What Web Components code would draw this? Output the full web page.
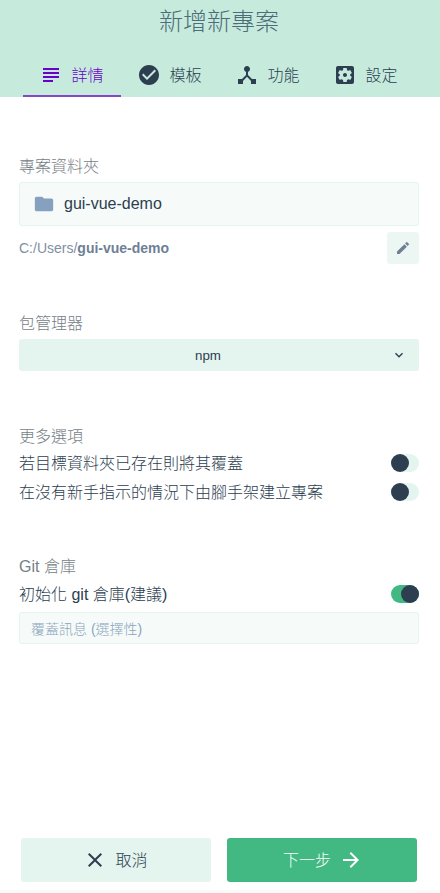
<!DOCTYPE html>
<html lang="zh-Hant"><head><meta charset="utf-8"><title>新增新專案</title>
<style>
html,body{margin:0;padding:0;height:100%;background:#fff}
body{font-family:"Liberation Sans","Noto Sans CJK TC",sans-serif;font-weight:300;color:#2c3e50}
</style></head><body>
<template id="t-tab"><style>
:host{display:flex;box-sizing:border-box;width:98px;height:44px;align-items:center;justify-content:center;gap:8px;font-size:16px;color:#2c3e50;padding:2px 1px 0 0;border-bottom:2px solid transparent}
:host([active]){color:#6a00c9;border-bottom-color:#8746c8}
::slotted(svg){display:block;flex:none}
span{margin-top:-3px}
</style><slot name="icon"></slot><span><slot></slot></span></template>

<template id="t-header"><style>
:host{display:block;height:97px;background:#c6ebdd}
h1{margin:0;height:43px;padding-right:2px;font-size:24px;line-height:44px;font-weight:300;text-align:center;color:#4d6b78}
nav{display:flex;padding:10px 0 0 23px}
</style><h1><slot name="title"></slot></h1><nav><slot></slot></nav></template>

<template id="t-section"><style>
:host{display:block;padding:0 21px 0 19px}
.l{font-size:16px;height:20px;line-height:22px;color:#767e86}
</style><div class="l"><slot name="label"></slot></div><slot></slot></template>

<template id="t-folder"><style>
:host{display:flex;box-sizing:border-box;height:44px;margin-top:6px;align-items:center;padding-left:13px;gap:9px;background:#f6fbf9;border:1px solid #e4f4ee;border-radius:3px;font-size:16px;color:#2c3e50}
svg{display:block}
</style><svg width="22" height="22" viewBox="0 0 24 24"><path fill="#86a0bf" d="M10 4H4c-1.100 0-2 .9-2 2v12c0 1.100.9 2 2 2h16c1.100 0 2-.9 2-2V8c0-1.100-.9-2-2-2h-8l-2-2z"/></svg><slot></slot></template>

<template id="t-path"><style>
:host{display:flex;align-items:center;justify-content:space-between;margin-top:6px;font-size:14px;color:#7f8fa4}
.e{width:32px;height:32px;border-radius:3px;background:#ecf7f3;display:flex;align-items:center;justify-content:center}
svg{display:block}
</style><span><slot></slot></span><div class="e"><svg width="16" height="16" viewBox="0 0 24 24"><path fill="#6e8093" d="M3 17.250V21h3.750L17.810 9.940l-3.750-3.750L3 17.250zM20.710 7.040a1 1 0 0 0 0-1.410l-2.340-2.340a1 1 0 0 0-1.410 0l-1.830 1.830 3.750 3.750 1.830-1.830z"/></svg></div></template>

<template id="t-select"><style>
:host{display:flex;box-sizing:border-box;height:32px;margin-top:6px;padding-right:22px;align-items:center;position:relative;justify-content:center;background:#e4f4ee;border-radius:3px;font-size:13.333px;color:#2c3e50}
svg{position:absolute;right:12px;top:8px;display:block}
</style><span><slot></slot></span><svg width="16" height="16" viewBox="0 0 24 24"><path fill="#2c3e50" d="M7.410 8.590 12 13.170l4.590-4.580L18 10l-6 6-6-6z"/></svg></template>

<template id="t-switch"><style>
:host{display:flex;align-items:center;justify-content:space-between;height:29px;font-size:16px;color:#2c3e50}
span{margin-top:-2px}
.t{position:relative;width:28px;height:18px;flex:none;background:#e4f4ee;border-radius:9px}
.k{position:absolute;left:0;top:0;width:18px;height:18px;border-radius:50%;background:#2c3e50}
:host([on]) .t{background:#42b983}
:host([on]) .k{left:10px}
</style><span><slot></slot></span><div class="t"><div class="k"></div></div></template>

<template id="t-input"><style>
:host{display:flex;box-sizing:border-box;height:32px;margin-top:3px;align-items:center;padding-left:11px;background:#f6fbf9;border:1px solid #e4f4ee;border-radius:3px;font-size:14px;color:#8aa5c0}
</style><slot></slot></template>

<template id="t-btn"><style>
:host{display:flex;box-sizing:border-box;width:190px;height:44px;padding-right:1px;align-items:center;justify-content:center;gap:8px;border-radius:3px;background:#e4f4ee;color:#2c3e50;font-size:16px}
:host([primary]){background:#42b983;color:#fff;padding:0 0 0 2px}
::slotted(svg){display:block;flex:none}
span{margin-top:-3px}
</style><slot name="before"></slot><span><slot></slot></span><slot name="after"></slot></template>

<template id="t-app"><style>
:host{display:flex;flex-direction:column;height:893px;box-sizing:border-box;background:#fff}
main{flex:1;display:flex;flex-direction:column;padding-top:59px}
footer{display:flex;gap:16px;padding:0 23px 8px 21px;border-bottom:3px solid #fafafa}
</style><slot name="header"></slot><main><slot></slot></main><footer><slot name="footer"></slot></footer></template>

<new-project-app>
<app-header slot="header">
<span slot="title">新增新專案</span>
<app-tab active><svg slot="icon" width="24" height="24" viewBox="0 0 24 24"><path fill="#6a00c9" d="M14 17H4v2h10v-2zm6-8H4v2h16V9zM4 15h16v-2H4v2zM4 5v2h16V5H4z"/></svg>詳情</app-tab>
<app-tab><svg slot="icon" width="24" height="24" viewBox="0 0 24 24"><path fill="#2c3e50" d="M12 2C6.480 2 2 6.480 2 12s4.480 10 10 10 10-4.480 10-10S17.520 2 12 2zm-2 15-5-5 1.410-1.410L10 14.170l7.590-7.590L19 8l-9 9z"/></svg>模板</app-tab>
<app-tab><svg slot="icon" width="24" height="24" viewBox="0 0 24 24"><path fill="#2c3e50" d="M17 16l-4-4V8.820C14.160 8.400 15 7.300 15 6c0-1.660-1.340-3-3-3S9 4.340 9 6c0 1.300.84 2.400 2 2.820V12l-4 4H3v5h5v-3.050l4-4.200 4 4.200V21h5v-5h-4z"/></svg>功能</app-tab>
<app-tab><svg slot="icon" width="24" height="24" viewBox="0 0 24 24"><path fill="#2c3e50" d="M12 10c-1.100 0-2 .9-2 2s.9 2 2 2 2-.9 2-2-.9-2-2-2zm7-7H5c-1.110 0-2 .9-2 2v14c0 1.100.89 2 2 2h14c1.110 0 2-.9 2-2V5c0-1.100-.89-2-2-2zm-1.750 9c0 .23-.02.46-.05.68l1.480 1.160c.13.110.17.3.08.450l-1.400 2.420c-.09.150-.27.210-.43.150l-1.740-.7c-.36.280-.76.510-1.180.690l-.26 1.850c-.03.170-.18.3-.35.3h-2.800c-.17 0-.32-.13-.35-.29l-.26-1.850c-.43-.18-.82-.41-1.180-.69l-1.740.7c-.16.060-.34 0-.43-.15l-1.400-2.420c-.09-.15-.05-.34.08-.45l1.480-1.160c-.03-.23-.05-.46-.05-.69 0-.23.020-.46.050-.68l-1.480-1.160c-.13-.11-.17-.3-.08-.45l1.400-2.420c.09-.15.27-.21.43-.15l1.740.7c.36-.28.76-.51 1.180-.69l.26-1.850c.03-.17.18-.3.35-.3h2.800c.17 0 .32.130.35.290l.26 1.850c.43.180.82.410 1.180.690l1.740-.7c.16-.06.340 0 .43.150l1.400 2.420c.090.150.050.340-.08.450l-1.480 1.160c.03.230.05.460.05.690z"/></svg>設定</app-tab>
</app-header>

<form-section><span slot="label">專案資料夾</span>
<folder-field>gui-vue-demo</folder-field>
<path-line>C:/Users/<b style="font-weight:700;color:#6e7f96">gui-vue-demo</b></path-line>
</form-section>

<form-section style="margin-top:49px"><span slot="label">包管理器</span>
<select-box>npm</select-box>
</form-section>

<form-section style="margin-top:55px"><span slot="label">更多選項</span>
<switch-row style="margin-top:2px">若目標資料夾已存在則將其覆蓋</switch-row>
<switch-row>在沒有新手指示的情況下由腳手架建立專案</switch-row>
</form-section>

<form-section style="margin-top:50px"><span slot="label">Git 倉庫</span>
<switch-row on style="margin-top:3px;height:30px">初始化 git 倉庫(建議)</switch-row>
<text-input>覆蓋訊息 (選擇性)</text-input>
</form-section>

<app-btn slot="footer"><svg slot="before" width="24" height="24" viewBox="0 0 24 24"><path fill="#2c3e50" d="M19 6.410 17.590 5 12 10.590 6.410 5 5 6.410 10.590 12 5 17.590 6.410 19 12 13.410 17.590 19 19 17.590 13.410 12z"/></svg>取消</app-btn>
<app-btn slot="footer" primary>下一步<svg slot="after" width="24" height="24" viewBox="0 0 24 24"><path fill="#fff" d="M12 4l-1.410 1.410L16.170 11H4v2h12.170l-5.580 5.590L12 20l8-8z"/></svg></app-btn>
</new-project-app>

<script>
const defs={'new-project-app':'t-app','app-header':'t-header','app-tab':'t-tab','form-section':'t-section','folder-field':'t-folder','path-line':'t-path','select-box':'t-select','switch-row':'t-switch','text-input':'t-input','app-btn':'t-btn'};
for(const [n,id] of Object.entries(defs)){
  customElements.define(n,class extends HTMLElement{
    constructor(){super();this.attachShadow({mode:'open'}).appendChild(document.getElementById(id).content.cloneNode(true));}
  });
}
</script>
</body></html>
